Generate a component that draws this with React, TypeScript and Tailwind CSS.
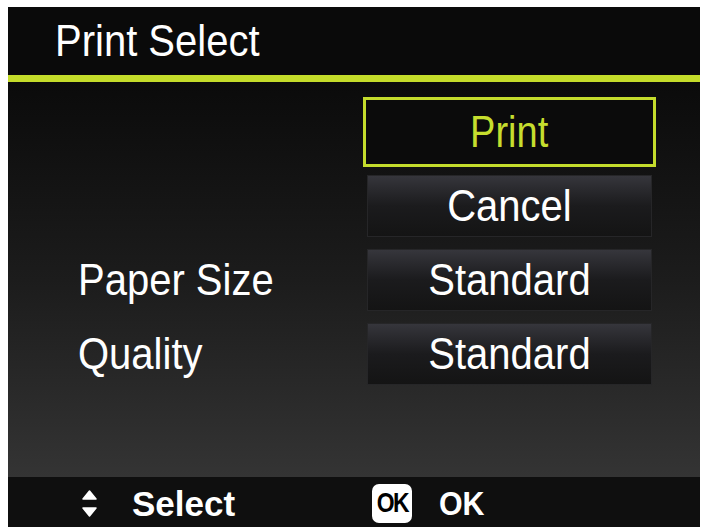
const font = "font-['Liberation_Sans',Arial,sans-serif]";
const tall = "inline-block scale-y-[1.1]";

function MenuButton({ label }: { label: string }) {
  return (
    <div className="flex h-[74px] w-[293px] items-center justify-center">
      <div className="flex h-[62px] w-[285px] items-center justify-center border border-[#262628] bg-linear-to-b from-[#36363c] via-[#1b1b1d] to-[#141414] text-[40px] leading-none text-white">
        <span className={tall}>{label}</span>
      </div>
    </div>
  );
}

function SelectedButton({ label }: { label: string }) {
  return (
    <div className="flex h-[74px] w-[293px] items-center justify-center">
      <div className="flex h-[70px] w-[293px] items-center justify-center border-[3px] border-[#c4dc2c] bg-[#0b0b0b] text-[40px] leading-none text-[#c6de2e]">
        <span className={`${tall} scale-x-[0.95]`}>{label}</span>
      </div>
    </div>
  );
}

function Row({ label, children }: { label?: string; children: React.ReactNode }) {
  return (
    <div className="flex h-[74px] items-center justify-between pl-[70px] pr-[44px]">
      <span className={`${tall} text-[40px] leading-none text-white`}>{label}</span>
      {children}
    </div>
  );
}

function UpDownIcon() {
  return (
    <svg width="15" height="27" viewBox="0 0 15 27" className="text-white">
      <path d="M7.5 1 L14 9 L1 9 Z" fill="currentColor" strokeLinejoin="round" stroke="currentColor" strokeWidth="1.5" />
      <path d="M1 18 L14 18 L7.5 26 Z" fill="currentColor" strokeLinejoin="round" stroke="currentColor" strokeWidth="1.5" />
    </svg>
  );
}

export default function App() {
  return (
    <div className={`h-[528px] w-[704px] bg-white pb-[1px] pl-[8px] pr-[4px] pt-[7px] ${font}`}>
      <div className="flex h-full flex-col bg-black">
        <div className="flex h-[68px] items-center bg-[#0a0a0a] pl-[47px]">
          <span className={`${tall} text-[40px] leading-none text-white`}>Print Select</span>
        </div>
        <div className="h-[7px] bg-[#c4dc2a]" />
        <div className="flex flex-1 flex-col bg-linear-to-b from-[#0b0b0b] via-[#1c1c1c] to-[#343434] pt-[13px]">
          <Row>
            <SelectedButton label="Print" />
          </Row>
          <Row>
            <MenuButton label="Cancel" />
          </Row>
          <Row label="Paper Size">
            <MenuButton label="Standard" />
          </Row>
          <Row label="Quality">
            <MenuButton label="Standard" />
          </Row>
        </div>
        <div className="flex h-[50px] items-center bg-[#0f0f0f] pl-[74px] pt-[3px] font-bold text-white">
          <UpDownIcon />
          <span className="ml-[35px] text-[35px] leading-none">Select</span>
          <span className="ml-[137px] flex h-[39px] w-[40px] items-center justify-center rounded-[7px] bg-white text-black">
            <span className="inline-block scale-x-[0.85] text-[27px] leading-none tracking-[-2px]">OK</span>
          </span>
          <span className="ml-[25px] inline-block scale-x-[0.92] text-[33px] leading-none">OK</span>
        </div>
      </div>
    </div>
  );
}
